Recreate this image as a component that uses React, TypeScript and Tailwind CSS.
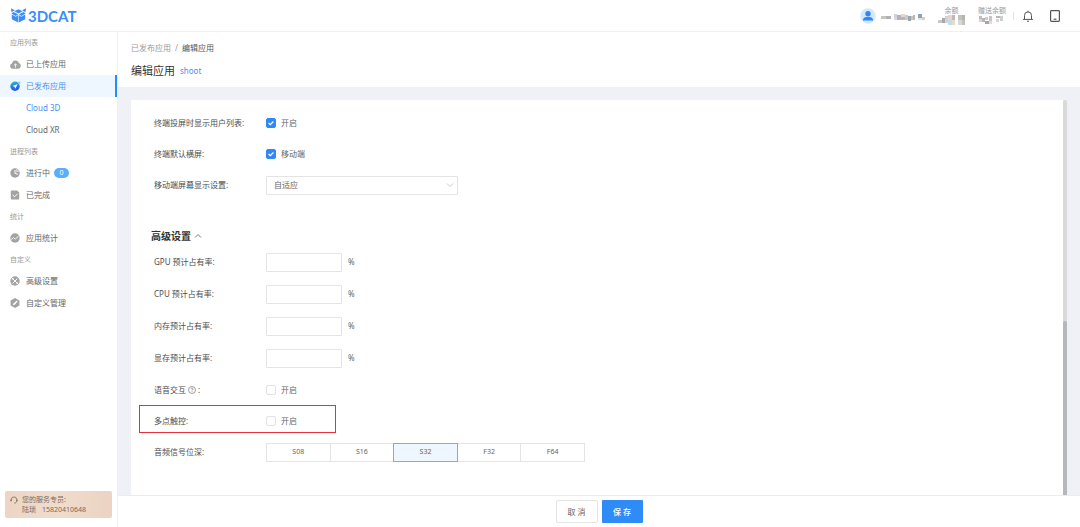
import React, { useState } from "react";

type Block = [number, number, number, number, string];

// Masked account name and balances, drawn as coloured blocks
const nameBlocks: Block[] = [
  [0, 2, 5, 3, "#c4c4c0"],
  [5, 2, 5, 3, "#b0b2b0"],
  [13, 0, 3, 3, "#c9d2e4"],
  [13, 3, 3, 3, "#d8d8dc"],
  [16, 1, 4, 5, "#b3b3b8"],
  [20, 0, 4, 3, "#e9d8d2"],
  [20, 3, 4, 3, "#b9b4b6"],
  [24, 1, 3, 5, "#c3cbd8"],
  [27, 2, 3, 5, "#9fa4a9"],
  [30, 2, 2, 4, "#c9c4bd"],
  [32, 1, 2, 5, "#b8b8ba"],
  [37, 0, 4, 4, "#8fa3b5"],
  [37, 4, 4, 2, "#dbe6ee"],
  [41, 3, 3, 3, "#d9cfba"],
];
const balanceBlocks: Block[] = [
  [0, 5, 4, 3, "#c6c8c2"],
  [4, 3, 3, 5, "#a9aba6"],
  [7, 1, 3, 7, "#cfd3da"],
  [10, 0, 4, 5, "#e9d5c2"],
  [10, 5, 4, 5, "#c6dced"],
  [14, 0, 3, 5, "#b9b9bd"],
  [14, 5, 3, 5, "#e6ddc8"],
  [20, 0, 4, 5, "#c2c3bd"],
  [24, 0, 3, 5, "#b3b5b0"],
  [20, 5, 4, 5, "#d8d9d4"],
  [24, 5, 3, 5, "#bfc4b8"],
];
const giftBlocks: Block[] = [
  [1, 1, 3, 3, "#c9b8c4"],
  [1, 4, 3, 3, "#d9d9d4"],
  [4, 3, 3, 4, "#b8b6ae"],
  [7, 2, 3, 3, "#d6c9cf"],
  [7, 6, 4, 3, "#a9a3a6"],
  [11, 1, 3, 5, "#c4c6cc"],
  [11, 6, 3, 3, "#e6dccf"],
  [18, 1, 4, 2, "#b9bab5"],
  [22, 1, 3, 5, "#c9d2cc"],
  [18, 4, 3, 3, "#e2d3d6"],
];

const Masked = ({ blocks, width, height, label }: { blocks: Block[]; width: number; height: number; label: string }) => (
  <svg width={width} height={height} role="img" aria-label={label}>
    {blocks.map(([x, y, w, h, fill], i) => (
      <rect key={i} x={x} y={y} width={w} height={h} fill={fill} />
    ))}
  </svg>
);

const Header = () => (
  <header className="flex h-8 shrink-0 items-center justify-between border-b border-[#f0f0f0] bg-white pl-[11px] pr-[19px] shadow-[0_1px_2px_rgba(0,0,0,0.03)]">
    <a href="#" className="flex items-center gap-[2px] text-[#3a8ef6]">
      <svg width="15" height="15" viewBox="0 0 15 15" fill="currentColor">
        <path d="M0 .3 3.900 2.200.5 4.200zM15 .3l-3.900 1.900 3.400 2z" />
        <path d="M7.500 1.300 11.700 3.300 7.500 5.600 3.300 3.300z" />
        <path d="M2.600 3.900 7 6.300 4.700 7.900.3 5.400zM12.400 3.900 8 6.300l2.300 1.600 4.400-2.500z" />
        <path d="M.8 6.400 4.800 8.700 7.200 7.100v7.400L.8 11.300zM14.200 6.400l-4 2.300-2.400-1.600v7.400l6.400-3.200z" />
      </svg>
      <span className="font-[Lato,sans-serif] text-[15px] leading-5 font-bold">3DCAT</span>
    </a>
    <div className="flex items-center">
      <svg width="16" height="16" viewBox="0 0 16 16">
        <circle cx="8" cy="8" r="7.700" fill="#d3e7fe" />
        <circle cx="8" cy="5.700" r="2.700" fill="#2f88f5" />
        <path d="M2.900 12.500c0-2.500 1.800-3.600 3.600-3.600h3c1.800 0 3.600 1.100 3.600 3.600z" fill="#2f88f5" />
      </svg>
      <div className="ml-[5px] flex w-11 pt-1">
        <Masked blocks={nameBlocks} width={44} height={7} label="用户名" />
      </div>
      <div className="ml-[13px] flex w-[27px] flex-col items-center text-[7px] leading-[9px] text-[#999]">
        余额
        <Masked blocks={balanceBlocks} width={27} height={10} label="余额" />
      </div>
      <div className="ml-[13px] flex w-7 flex-col items-center whitespace-nowrap text-[7px] leading-[9px] text-[#999]">
        赠送余额
        <Masked blocks={giftBlocks} width={28} height={10} label="赠送余额" />
      </div>
      <div className="ml-[7px] h-2 w-px bg-[#e4e4e4]" />
      <button type="button" aria-label="通知" className="ml-2 text-[#555]">
        <svg width="12" height="12" viewBox="0 0 12 12" fill="none" stroke="currentColor">
          <path d="M2.500 9.300V5.400a3.500 3.500 0 0 1 7 0v3.900M.9 9.400h10.200M6 1.900V.7" />
          <path d="M5 11.200h2" />
        </svg>
      </button>
      <button type="button" aria-label="设备" className="ml-[15px] text-[#555]">
        <svg width="12" height="12" viewBox="0 0 12 12" fill="none" stroke="currentColor" strokeWidth="1.200">
          <rect x="1.600" y=".7" width="8.800" height="10.600" rx=".8" />
          <path d="M4.600 9.200h2.800" />
        </svg>
      </button>
    </div>
  </header>
);

const icons = {
  upload: (
    <svg width="11" height="10" viewBox="0 0 11 10">
      <path d="M2.600 9.700a2.600 2.600 0 0 1-.6-5.100A3.500 3.500 0 0 1 8.900 4.100 2.900 2.900 0 0 1 8.300 9.700z" fill="#a3a3a3" />
      <path d="M5.500 8.700V5M3.900 6.400 5.500 4.800l1.600 1.600" fill="none" stroke="#fff" strokeWidth=".8" />
    </svg>
  ),
  published: (
    <svg width="11" height="10" viewBox="0 0 11 10">
      <defs>
        <linearGradient id="pub" x1="0" y1="0" x2=".4" y2="1">
          <stop offset="0" stopColor="#34d6b8" />
          <stop offset=".5" stopColor="#2388d8" />
          <stop offset="1" stopColor="#2b55ee" />
        </linearGradient>
      </defs>
      <circle cx="5" cy="5.200" r="4.700" fill="url(#pub)" />
      <circle cx="9.200" cy="1.700" r="1.300" fill="#7fd8f5" />
      <path d="M7.700 2.900 2.600 5l1.900.8.800 1.900z" fill="#fff" />
    </svg>
  ),
  running: (
    <svg width="11" height="10" viewBox="0 0 11 10">
      <circle cx="5" cy="5" r="4.700" fill="#a3a3a3" />
      <path d="M5 2v3.300l2.800 1" fill="none" stroke="#fff" />
      <path d="M6 .4a4.700 4.700 0 0 1 3.500 3.400L6 4.300z" fill="#d0d0d0" />
    </svg>
  ),
  done: (
    <svg width="11" height="10" viewBox="0 0 11 10">
      <path d="M1.500.5h5.700l2 2v6.300a.7.700 0 0 1-.7.700h-7a.7.700 0 0 1-.7-.7V1.200a.7.700 0 0 1 .7-.7z" fill="#a3a3a3" />
      <path d="m2.700 5 1.900 1.800 3-3" fill="none" stroke="#fff" />
    </svg>
  ),
  stats: (
    <svg width="11" height="10" viewBox="0 0 11 10">
      <circle cx="5" cy="5" r="4.700" fill="#a3a3a3" />
      <path d="m1.200 6.600 2.300-2 1.700 1.500 3.400-3" fill="none" stroke="#fff" strokeWidth=".9" />
    </svg>
  ),
  advanced: (
    <svg width="11" height="10" viewBox="0 0 11 10">
      <circle cx="5" cy="5" r="4.700" fill="#a3a3a3" />
      <path d="m2.600 2.600 4.800 4.800M7.400 2.600 2.600 7.400" stroke="#fff" strokeWidth="1" />
      <circle cx="7.300" cy="7.300" r=".9" fill="#fff" />
      <circle cx="2.700" cy="2.700" r=".9" fill="#fff" />
    </svg>
  ),
  custom: (
    <svg width="11" height="10" viewBox="0 0 11 10">
      <path d="M5 0 9.400 2.500v5L5 10 .6 7.500v-5z" fill="#a3a3a3" />
      <path d="M3 7.300 3.300 5.800 6.700 2.500l1 1-3.300 3.400z" fill="#fff" />
    </svg>
  ),
};

const NavGroup = ({ title, children }: { title: string; children: React.ReactNode }) => (
  <section>
    <h2 className="h-[21px] pl-[10px] text-[7px] leading-[21px] text-[#999]">{title}</h2>
    <ul>{children}</ul>
  </section>
);

const NavItem = ({ icon, text, active, badge }: { icon: keyof typeof icons; text: string; active?: boolean; badge?: number }) => (
  <li>
    <a
      href="#"
      className={`flex h-[22px] items-center pl-[10px] ${active ? "border-r-2 border-[#1f8fff] bg-[#eef7ff] text-[#4a8ff5]" : "text-[#666]"}`}
    >
      {icons[icon]}
      <span className="ml-[5px]">{text}</span>
      {badge !== undefined && (
        <span className="ml-1 h-[10px] w-[15px] rounded-full bg-[#5aadff] text-center text-[7px] leading-[10px] text-white">{badge}</span>
      )}
    </a>
  </li>
);

const Sidebar = () => (
  <aside className="flex w-[118px] shrink-0 flex-col justify-between border-r border-[#f0f0f0] bg-white">
    <nav>
      <NavGroup title="应用列表">
        <NavItem icon="upload" text="已上传应用" />
        <NavItem icon="published" text="已发布应用" active />
        <li>
          <a href="#" className="flex h-[22px] items-center pl-[26px] text-[#4a8ff5]">Cloud 3D</a>
        </li>
        <li>
          <a href="#" className="flex h-[22px] items-center pl-[26px] text-[#666]">Cloud XR</a>
        </li>
      </NavGroup>
      <NavGroup title="进程列表">
        <NavItem icon="running" text="进行中" badge={0} />
        <NavItem icon="done" text="已完成" />
      </NavGroup>
      <NavGroup title="统计">
        <NavItem icon="stats" text="应用统计" />
      </NavGroup>
      <NavGroup title="自定义">
        <NavItem icon="advanced" text="高级设置" />
        <NavItem icon="custom" text="自定义管理" />
      </NavGroup>
    </nav>
    <div className="mx-[5px] mb-[9px] flex h-[27px] gap-1 rounded-[2px] bg-linear-to-r from-[#ecd5c5] via-[#f0dccd] to-[#ecd3c2] pl-[5px] pt-1 text-[7px] leading-[10px] text-[#7d6a5d]">
      <svg width="8" height="8" viewBox="0 0 8 8" className="mt-px" fill="none" stroke="#8d7768" strokeWidth=".9">
        <path d="M1.300 5V3.600a2.700 2.700 0 0 1 5.400 0V5c0 1.400-1 2.100-2.500 2.100" />
        <path d="M1 3.400v1.800M7 3.400v1.800" strokeWidth="1.400" />
      </svg>
      <div>
        <p>您的服务专员:</p>
        <p className="flex gap-[6px]">
          <span>陆琐</span>
          <span>15820410648</span>
        </p>
      </div>
    </div>
  </aside>
);

const Row = ({ label, id, tall, mark, children }: { label: React.ReactNode; id?: string; tall?: boolean; mark?: boolean; children: React.ReactNode }) => (
  <div className={`relative flex items-center ${tall ? "h-8" : "h-[31px]"}`}>
    <label htmlFor={id} className="flex w-28 items-center text-[#4d4d4d]">{label}</label>
    {children}
    {mark && <div className="pointer-events-none absolute -left-[15px] top-0 h-7 w-[197px] border border-[#e8303a]" />}
  </div>
);

const Check = ({ id, text, defaultChecked }: { id: string; text: string; defaultChecked?: boolean }) => {
  const [checked, setChecked] = useState(!!defaultChecked);
  return (
    <label className="flex items-center gap-[5px] text-[#666]">
      <span className="grid">
        <input
          id={id}
          type="checkbox"
          checked={checked}
          onChange={(e) => setChecked(e.target.checked)}
          className="col-start-1 row-start-1 h-[10px] w-[10px] appearance-none rounded-[2px] border border-[#e2e2e2] bg-white checked:border-[#2f88f5] checked:bg-[#2f88f5]"
        />
        {checked && (
          <svg width="10" height="10" viewBox="0 0 10 10" className="pointer-events-none col-start-1 row-start-1">
            <path d="m2.600 5 1.700 1.700 3.100-3.200" fill="none" stroke="#fff" strokeWidth="1.200" />
          </svg>
        )}
      </span>
      {text}
    </label>
  );
};

const Percent = ({ id, label }: { id: string; label: string }) => (
  <Row label={label} id={id} tall>
    <input id={id} type="text" className="h-[19px] w-[76px] rounded-[1px] border border-[#e4e4e4] px-2 outline-none" />
    <span className="ml-[6px] text-[#666]">%</span>
  </Row>
);

const depths = ["S08", "S16", "S32", "F32", "F64"];

const AppForm = () => {
  const [depth, setDepth] = useState("S32");

  return (
    <form id="app-form" className="min-w-0 flex-1 overflow-hidden bg-white pl-[23px] pt-[7px]">
      <Row label="终端投屏时显示用户列表:" id="userList">
        <Check id="userList" text="开启" defaultChecked />
      </Row>
      <Row label="终端默认横屏:" id="landscape">
        <Check id="landscape" text="移动端" defaultChecked />
      </Row>
      <Row label="移动端屏幕显示设置:" id="screen" tall>
        <div className="grid w-48 items-center">
          <select id="screen" className="col-start-1 row-start-1 h-[19px] appearance-none rounded-[1px] border border-[#e4e4e4] bg-white px-[7px] text-[#666] outline-none">
            <option>自适应</option>
          </select>
          <svg width="8" height="8" viewBox="0 0 8 8" className="pointer-events-none col-start-1 row-start-1 mr-1 justify-self-end">
            <path d="m1 2.500 3 3 3-3" fill="none" stroke="#bbb" strokeWidth=".8" />
          </svg>
        </div>
      </Row>

      <button type="button" className="-ml-[3px] mt-[25px] flex h-5 items-center gap-[3px] text-[10px] font-bold text-[#333]">
        高级设置
        <svg width="8" height="8" viewBox="0 0 8 8">
          <path d="m1 5.500 3-3 3 3" fill="none" stroke="#555" strokeWidth=".8" />
        </svg>
      </button>

      <Percent id="gpu" label="GPU 预计占有率:" />
      <Percent id="cpu" label="CPU 预计占有率:" />
      <Percent id="memory" label="内存预计占有率:" />
      <Percent id="vram" label="显存预计占有率:" />
      <Row
        id="voice"
        label={
          <>
            语音交互
            <svg width="8" height="8" viewBox="0 0 8 8" className="ml-[2px] mr-[2px]" fill="none" stroke="#777" strokeWidth=".7">
              <circle cx="4" cy="4" r="3.500" />
              <path d="M2.900 3.200c0-1.500 2.200-1.400 2.200-.1 0 .8-1.100.8-1.100 1.600M4 5.300v.8" />
            </svg>
            :
          </>
        }
      >
        <Check id="voice" text="开启" />
      </Row>
      <Row label="多点触控:" id="touch" mark>
        <Check id="touch" text="开启" />
      </Row>
      <Row label="音频信号位深:" id="depth-S08" tall>
        <div className="flex w-[319px]">
          {depths.map((d) => (
            <label
              key={d}
              className={`relative -ml-px flex h-[19px] flex-1 items-center justify-center border text-[7px] text-[#666] first:ml-0 ${
                depth === d ? "z-10 border-[#6fb0fb] bg-[#eef6ff]" : "border-[#e4e4e4]"
              }`}
            >
              <input id={`depth-${d}`} type="radio" name="depth" value={d} checked={depth === d} onChange={() => setDepth(d)} className="sr-only" />
              {d}
            </label>
          ))}
        </div>
      </Row>
    </form>
  );
};

const App = () => {
  return (
    <div className="flex h-screen flex-col overflow-hidden bg-white font-['Noto_Sans','Noto_Sans_CJK_SC',sans-serif] text-[8px] leading-3">
      <Header />
      <div className="flex min-h-0 flex-1">
        <Sidebar />
        <main className="flex min-w-0 flex-1 flex-col bg-[#f0f1f6]">
          <div className="h-[55px] shrink-0 bg-white pl-[13px] pt-[10px]">
            <nav className="flex gap-1 text-[#999]">
              <a href="#">已发布应用</a>
              <span>/</span>
              <span className="text-[#555]">编辑应用</span>
            </nav>
            <div className="mt-[9px] flex items-center gap-[5px]">
              <h1 className="text-[11px] leading-4 text-[#333]">编辑应用</h1>
              <a href="#" className="text-[#4a8ff5]">shoot</a>
            </div>
          </div>

          <div className="flex min-h-0 flex-1 px-[13px] pt-[13px]">
            <AppForm />
            {/* Scroll track and thumb */}
            <div className="flex w-1 flex-col justify-end rounded-t-sm bg-[#d9d9d9]">
              <div className="h-[44%] rounded-t-sm bg-[#b5b7ba]" />
            </div>
          </div>

          <footer className="flex h-8 shrink-0 items-center justify-center gap-1 border-t border-[#ececec] bg-white">
            <button type="button" className="h-[23px] w-[42px] rounded-[2px] border border-[#e4e4e4] text-[#666]">取 消</button>
            <button type="submit" form="app-form" className="h-[23px] w-[41px] rounded-[1px] bg-[#2f8cf7] font-medium text-white">保 存</button>
          </footer>
        </main>
      </div>
    </div>
  );
};

export default App;
